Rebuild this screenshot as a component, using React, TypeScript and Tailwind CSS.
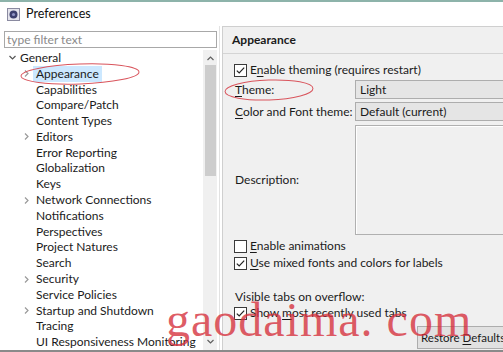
import React from "react";

const TREE: { label: string; arrow?: boolean; selected?: boolean }[] = [
  { label: "Appearance", arrow: true, selected: true },
  { label: "Capabilities" },
  { label: "Compare/Patch" },
  { label: "Content Types" },
  { label: "Editors", arrow: true },
  { label: "Error Reporting" },
  { label: "Globalization" },
  { label: "Keys" },
  { label: "Network Connections", arrow: true },
  { label: "Notifications" },
  { label: "Perspectives" },
  { label: "Project Natures" },
  { label: "Search" },
  { label: "Security", arrow: true },
  { label: "Service Policies" },
  { label: "Startup and Shutdown", arrow: true },
  { label: "Tracing" },
  { label: "UI Responsiveness Monitoring" },
];

const Chevron = ({ dir, className }: { dir: "right" | "down" | "up"; className?: string }) => {
  const d = dir === "right" ? "M3 1.5 L6 4.5 L3 7.5" : dir === "down" ? "M1.5 3 L4.5 6 L7.5 3" : "M1.5 6 L4.5 3 L7.5 6";
  return (
    <svg width="9" height="9" viewBox="0 0 9 9" className={className}>
      <path d={d} fill="none" stroke="currentColor" strokeWidth="1.2" />
    </svg>
  );
};

const Check = ({ checked }: { checked?: boolean }) => (
  <svg width="13" height="13" viewBox="0 0 13 13" className="shrink-0">
    <rect x="0.5" y="0.5" width="12" height="12" fill="#ffffff" stroke="#3a3a3a" />
    {checked && <path d="M2.8 6.6 L5.2 9 L10.2 3.6" fill="none" stroke="#222222" strokeWidth="1.2" />}
  </svg>
);

const CheckRow = ({ checked, pre, u, post }: { checked?: boolean; pre: string; u: string; post: string }) => (
  <div className="flex items-center gap-[3px] h-[16px] whitespace-nowrap">
    <Check checked={checked} />
    <span>
      {pre}
      <span className="underline underline-offset-2">{u}</span>
      {post}
    </span>
  </div>
);

export default function App() {
  return (
    <div className="relative w-[503px] h-[352px] overflow-hidden bg-white text-[12px] leading-[16px] text-[#1b1b1b] font-['Lato',sans-serif]">
      <div className="h-[2px] bg-[#8db3aa]" />
      {/* title bar */}
      <div className="h-[24px] flex items-center pl-[7px] gap-[6px]">
        <svg width="13" height="13" viewBox="0 0 13 13">
          <rect x="0.5" y="0.5" width="12" height="12" fill="#e4e4ec" stroke="#8a8aa0" />
          <circle cx="6.5" cy="6.5" r="4" fill="#3b3f6e" />
          <circle cx="6.5" cy="6.5" r="1.6" fill="#8f93c4" />
        </svg>
        <span className="text-[#111] text-[12.5px]">Preferences</span>
      </div>

      <div className="flex h-[324px]">
        {/* left pane */}
        <div className="w-[219px] shrink-0 flex flex-col">
          <div className="ml-[4px] mt-[5px] w-[213px] h-[17px] border border-[#a8a8a8] flex items-center px-[2px] text-[#8a8a8a]">
            type filter text
          </div>
          <div className="flex flex-1 mt-[2px] min-h-0">
            <div className="flex-1 overflow-hidden">
              <div className="h-[15.8px] flex items-center">
                <Chevron dir="down" className="ml-[8px] text-[#555]" />
                <span className="ml-[3px]">General</span>
              </div>
              {TREE.map((t) => (
                <div key={t.label} className="h-[15.8px] flex items-center whitespace-nowrap">
                  <div className="w-[36px] shrink-0 flex justify-end pr-[5px]">
                    {t.arrow && <Chevron dir="right" className="text-[#9a9a9a]" />}
                  </div>
                  <span className={t.selected ? "bg-[#cce8ff] px-[3px] -ml-[3px]" : ""}>{t.label}</span>
                </div>
              ))}
            </div>
            <div className="w-[14px] mr-[2px] bg-[#f0f0f0] flex flex-col items-center">
              <Chevron dir="up" className="mt-[4px] text-[#606060]" />
              <div className="mt-[2px] w-[11px] h-[111px] bg-[#cdcdcd]" />
              <div className="flex-1" />
              <Chevron dir="down" className="mb-[4px] text-[#606060]" />
            </div>
          </div>
        </div>
        <div className="w-[3px] border-l border-[#e2e2e2]" />

        {/* right pane */}
        <div className="flex-1 bg-[#f0f0f0] border-l border-t border-[#cfcfcf] overflow-hidden">
          <div className="h-[27px] flex items-center pl-[9px] font-bold border-b border-[#d4d4d4]">Appearance</div>
          <div className="pl-[11px] pt-[8px] w-[320px]">
            <CheckRow checked pre="E" u="n" post="able theming (requires restart)" />
            <div className="grid grid-cols-[121px_1fr] gap-y-[3px] mt-[2px] items-center whitespace-nowrap">
              <span className="pl-[1px]"><span className="underline underline-offset-2">T</span>heme:</span>
              <div className="h-[19px] bg-[#e5e5e5] border border-[#adadad] flex items-center pl-[4px]">Light</div>
              <span className="pl-[1px]"><span className="underline underline-offset-2">C</span>olor and Font theme:</span>
              <div className="h-[19px] bg-[#e5e5e5] border border-[#adadad] flex items-center pl-[4px]">Default (current)</div>
              <span className="pl-[1px]">Description:</span>
              <div className="h-[110px] mt-[1px] border border-[#b0b0b0] bg-[#f0f0f0] shadow-[inset_1px_1px_0_#ffffff]" />
            </div>
            <div className="mt-[3px]">
              <CheckRow pre="" u="E" post="nable animations" />
            </div>
            <div className="mt-[1px]">
              <CheckRow checked pre="" u="U" post="se mixed fonts and colors for labels" />
            </div>
            <div className="mt-[18px] pl-[1px]">Visible tabs on overflow:</div>
            <CheckRow checked pre="Show " u="m" post="ost recently used tabs" />
            <div className="flex mt-[5px] ml-[183px]">
              <div className="w-[103px] h-[23px] shrink-0 border border-[#adadad] bg-[#e1e1e1] flex items-center pl-[3px] whitespace-nowrap text-[11.5px]">
                Restore&nbsp;<span className="underline underline-offset-2">D</span>efaults...
              </div>
            </div>
          </div>
        </div>
      </div>
      <div className="h-[2px] bg-[#8a8a8a]" />

      {/* annotations */}
      <svg className="absolute left-0 top-0 pointer-events-none" width="503" height="352">
        <ellipse cx="80" cy="74" rx="59" ry="10" fill="none" stroke="#d9545c" strokeWidth="1" transform="rotate(-2 80 74)" />
        <ellipse cx="269" cy="90" rx="44" ry="10" fill="none" stroke="#d9545c" strokeWidth="1" transform="rotate(-2 269 90)" />
      </svg>
      <div className="absolute left-[166px] top-[292px] text-[48px] leading-[56px] tracking-[1px] text-[rgba(214,48,60,0.78)] font-['Liberation_Serif',serif] pointer-events-none whitespace-nowrap">
        gaodaima. com
      </div>
    </div>
  );
}
